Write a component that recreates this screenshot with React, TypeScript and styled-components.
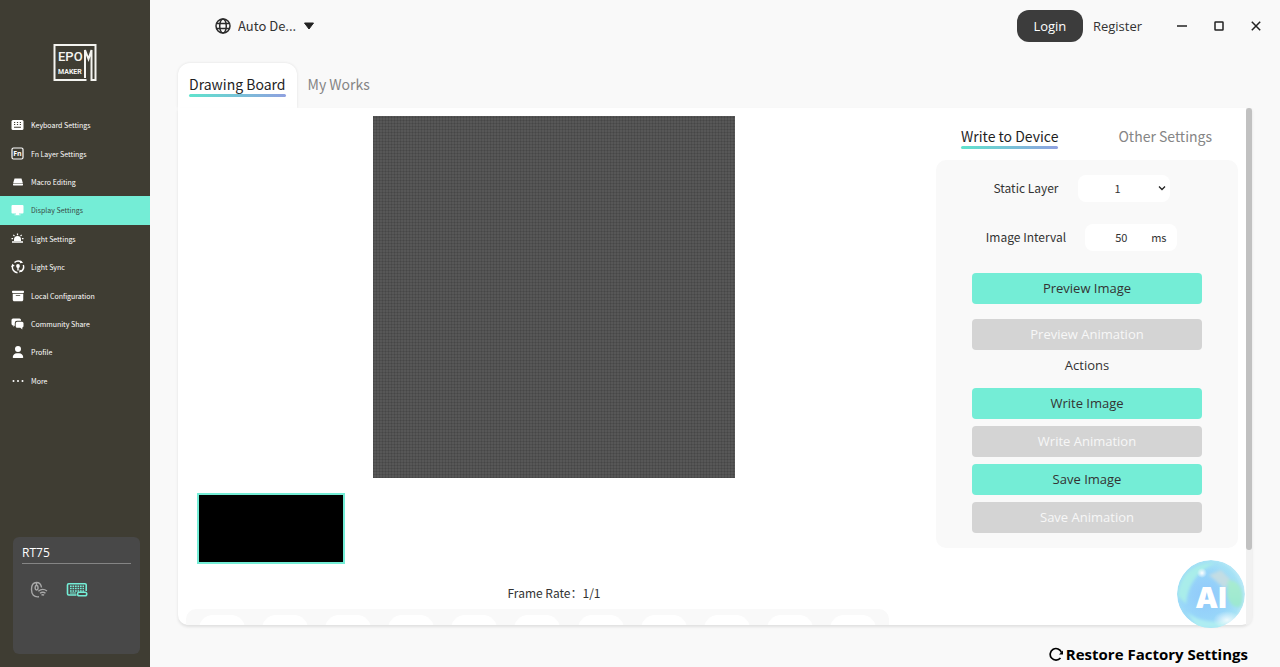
import React from "react";
import styled, { createGlobalStyle } from "styled-components";
import { FaUser, FaBoxArchive } from "react-icons/fa6";

const han = `"Noto Sans CJK SC", "Noto Sans", sans-serif`;
const ui = `"Open Sans", "Noto Sans", "Noto Sans CJK SC", sans-serif`;
const mint = "#74edd6";
const underline = "linear-gradient(90deg, #5fe3cd, #8fa0e0)";

const GlobalStyle = createGlobalStyle`
  * { box-sizing: border-box; }
  body { margin: 0; background: #f9f9f9; color: #333; font-family: ${han}; }
  button, select, input { font: inherit; color: inherit; border: 0; background: none; padding: 0; margin: 0; }
  button { cursor: pointer; }
  svg { display: block; flex: none; }
`;

const Shell = styled.div`
  display: flex;
  height: 100vh;
  overflow: hidden;
`;

const Sidebar = styled.aside`
  flex: none;
  width: 150px;
  display: flex;
  flex-direction: column;
  background: #3f3d33;
  padding-bottom: 13px;
`;

const Brand = styled.div`
  display: flex;
  justify-content: center;
  padding: 43px 0 29px;
`;

const Menu = styled.nav`
  display: grid;
  grid-auto-rows: 1fr;
  height: 284px;
`;

const MenuLink = styled.a<{ $active?: boolean }>`
  display: grid;
  grid-template-columns: 13px 1fr;
  align-items: center;
  gap: 7px;
  padding-left: 11px;
  font-size: 7px;
  line-height: 12px;
  text-decoration: none;
  white-space: nowrap;
  color: ${(p) => (p.$active ? "#3a4a46" : "#fff")};
  background: ${(p) => (p.$active ? mint : "transparent")};
  svg { color: #fff; justify-self: center; }
`;

const DeviceCard = styled.section`
  margin: auto 10px 0 13px;
  height: 117px;
  border-radius: 6px;
  background: #484848;
  padding: 6px 9px;
`;

const DeviceName = styled.h2`
  margin: 0;
  font: 400 12px/20px ${ui};
  color: #fff;
  border-bottom: 1px solid #858585;
`;

const DeviceModes = styled.div`
  display: flex;
  gap: 18px;
  padding: 17px 8px;
`;

const Main = styled.main`
  flex: 1;
  min-width: 0;
  display: flex;
  flex-direction: column;
  padding: 0 28px 0 28px;
`;

const TopBar = styled.header`
  display: flex;
  align-items: center;
  height: 52px;
  padding: 0 0 0 37px;
  margin-right: -14px;
`;

const Language = styled.label`
  display: flex;
  align-items: center;
  gap: 7px;
`;

const LanguageSelect = styled.select`
  appearance: none;
  width: 59px;
  font-size: 13px;
  line-height: 24px;
`;

const Account = styled.div`
  display: flex;
  align-items: center;
  gap: 10px;
  margin-left: auto;
  font: 400 13px/20px ${ui};
`;

const LoginButton = styled.button`
  width: 66px;
  height: 32px;
  border-radius: 12px;
  background: #3c3c3c;
  color: #fff;
`;

const WindowButtons = styled.div`
  display: flex;
  gap: 17px;
  margin-left: 20px;
  button { width: 20px; height: 20px; display: grid; place-items: center; }
`;

const Tabs = styled.div`
  display: flex;
  margin-top: 11px;
`;

const Tab = styled.button<{ $active?: boolean }>`
  height: 45px;
  padding: 10px 11px 11px;
  border-radius: 12px 12px 0 0;
  font-size: 14px;
  line-height: 22px;
  color: ${(p) => (p.$active ? "#1f1f1f" : "#858585")};
  background: ${(p) => (p.$active ? "#fff" : "transparent")};
  box-shadow: ${(p) => (p.$active ? "0 0 3px rgba(0, 0, 0, 0.1)" : "none")};
`;

const TabLabel = styled.span<{ $active?: boolean }>`
  display: block;
  &::after {
    content: "";
    display: block;
    height: 3px;
    margin-top: -1px;
    border-radius: 2px;
    background: ${(p) => (p.$active ? underline : "none")};
  }
`;

const Panel = styled.section`
  position: relative;
  flex: 1;
  min-height: 0;
  display: flex;
  background: #fff;
  border-radius: 0 0 10px 10px;
  box-shadow: 0 2px 3px rgba(0, 0, 0, 0.1);
`;

const PanelBody = styled.div`
  flex: 1;
  min-width: 0;
  display: flex;
  gap: 6px;
  padding-right: 8px;
  overflow: hidden;
  border-radius: 0 0 0 10px;
`;

const Board = styled.div`
  flex: 1;
  min-width: 0;
  display: flex;
  flex-direction: column;
  align-items: center;
  padding-top: 8px;
`;

const PixelCanvas = styled.div`
  flex: none;
  width: 362px;
  height: 362px;
  background:
    repeating-linear-gradient(90deg, rgba(0, 0, 0, 0.1) 0 1px, transparent 1px 3px),
    repeating-linear-gradient(0deg, rgba(0, 0, 0, 0.1) 0 1px, transparent 1px 3px),
    #575757;
`;

const Frame = styled.button`
  flex: none;
  align-self: flex-start;
  width: 148px;
  height: 71px;
  margin: 15px 0 0 19px;
  border: 2px solid ${mint};
  background: #000;
`;

const FrameRate = styled.p`
  margin: 17px 0 4px;
  font-size: 12px;
  line-height: 24px;
`;

const Tools = styled.div`
  flex: none;
  align-self: stretch;
  display: grid;
  grid-template-columns: repeat(11, 1fr);
  justify-items: center;
  margin: 0 41px 0 8px;
  padding: 6px 4px;
  border-radius: 10px;
  background: #f9f9f9;
`;

const Tool = styled.button`
  width: 46px;
  height: 46px;
  border-radius: 14px;
  background: #fff;
`;

const Side = styled.div`
  flex: none;
  width: 302px;
  padding-top: 17px;
`;

const SideTabs = styled.div`
  display: flex;
  justify-content: space-between;
  padding: 0 26px 0 25px;
`;

const SideTab = styled.button<{ $active?: boolean }>`
  font-size: 14px;
  line-height: 22px;
  color: ${(p) => (p.$active ? "#1f1f1f" : "#858585")};
`;

const Settings = styled.div`
  margin-top: 11px;
  height: 388px;
  padding: 15px 36px;
  border-radius: 10px;
  background: #f9f9f9;
  display: flex;
  flex-direction: column;
`;

const Field = styled.div`
  display: flex;
  align-items: center;
  justify-content: center;
  gap: 19px;
  height: 27px;
  margin-bottom: 22px;
  margin-right: 11px;
  font-size: 12px;
  line-height: 20px;
  label { padding-bottom: 2px; }
`;

const FieldBox = styled.div`
  display: flex;
  align-items: center;
  width: 92px;
  height: 27px;
  padding: 0 3px 1px 30px;
  border-radius: 8px;
  background: #fff;
  font-size: 11px;
`;

const LayerSelect = styled.select`
  appearance: none;
  width: 50px;
  padding-left: 7px;
`;

const IntervalInput = styled.input`
  width: 36px;
`;

const Action = styled.button`
  flex: none;
  height: 31px;
  padding-bottom: 1px;
  border-radius: 4px;
  background: ${mint};
  font: 400 13px/20px ${ui};
  &:disabled { background: #d4d4d4; color: #f7f7f7; }
`;

const ActionGroup = styled.div<{ $gap: number }>`
  display: grid;
  gap: ${(p) => p.$gap}px;
`;

const ActionsTitle = styled.h3`
  margin: 5px 0 13px;
  text-align: center;
  font: 400 13px/20px ${ui};
`;

const ScrollTrack = styled.div`
  flex: none;
  width: 6px;
  background: #f1f1f1;
  border-radius: 0 0 6px 0;
`;

const ScrollThumb = styled.div`
  height: 85.5%;
  border-radius: 3px;
  background: #c1c1c1;
`;

const Assistant = styled.button`
  position: absolute;
  right: 7px;
  bottom: -3px;
  width: 68px;
  height: 68px;
`;

const Footer = styled.footer`
  flex: none;
  display: flex;
  justify-content: flex-end;
  height: 42px;
  padding: 17px 4px 0 0;
`;

const Restore = styled.button`
  display: flex;
  align-items: center;
  gap: 3px;
  height: 24px;
  font: 700 15px/24px ${ui};
  color: #000;
`;

const Logo = () => (
  <svg width="44" height="39" viewBox="0 0 44 39" role="img" aria-label="EPOMAKER">
    <path d="M33.500 37H1.500V2H42.500V37H38.500V7L35.500 16L32 7V35" fill="none" stroke="#f4f4f0" strokeWidth="2" />
    <text x="5" y="18" fontFamily="Roboto" fontSize="13" fontWeight="500" fill="#f4f4f0">EPO</text>
    <text x="5" y="31" fontFamily="Roboto" fontSize="7" fontWeight="700" fill="#f4f4f0">MAKER</text>
  </svg>
);

const KeyboardIcon = () => (
  <svg width="13" height="12" viewBox="0 0 13 12">
    <rect x=".5" y="1" width="12" height="10" rx="1.500" fill="currentColor" />
    <path d="M3 3.500h1.200M5.900 3.500h1.200M8.800 3.500H10M3 5.500h1.200M5.900 5.500h1.200M8.800 5.500H10M3 8.200h7" stroke="#3f3d33" strokeWidth="1.100" />
  </svg>
);
const FnIcon = () => (
  <svg width="13" height="13" viewBox="0 0 13 13">
    <rect x="1" y="1" width="11" height="11" rx="1.500" fill="none" stroke="currentColor" strokeWidth="1.200" />
    <text x="6.500" y="9" textAnchor="middle" fontFamily="Open Sans" fontWeight="700" fontSize="7" fill="currentColor">Fn</text>
  </svg>
);
const MacroIcon = () => (
  <svg width="12" height="8" viewBox="0 0 12 8" fill="currentColor">
    <path d="M2.500.5h7l1.300 4.500H1.200z" />
    <rect x="1" y="5.400" width="10" height="2" rx=".6" />
  </svg>
);
const DisplayIcon = () => (
  <svg width="13" height="12" viewBox="0 0 13 12" fill="currentColor">
    <rect x=".5" y="1" width="12" height="8.500" rx="1" />
    <path d="M5 9h3v1.500h1.500v.8h-6v-.8H5z" />
  </svg>
);
const LightIcon = () => (
  <svg width="13" height="11" viewBox="0 0 13 11">
    <path d="M3 8V6.500a3.500 3.500 0 0 1 7 0V8z" fill="currentColor" />
    <path d="M1 9h11" stroke="currentColor" strokeWidth="1.500" />
    <path d="M6.500.5v1.700M2.300 1.800l1.200 1.300M10.700 1.800L9.500 3.100M.5 5.700h1.600M10.900 5.700h1.600" stroke="currentColor" strokeWidth="1.200" />
  </svg>
);
const SyncIcon = () => (
  <svg width="14" height="14" viewBox="0 0 14 14" fill="none" stroke="currentColor" strokeWidth="1.400">
    <path d="M3.500 2.500a5.500 5.500 0 0 1 6.700-.4M12.300 5a5.500 5.500 0 0 1-2.500 6.500M6.500 12.700A5.600 5.600 0 0 1 1.500 6" />
    <path d="M9.600.3l2.500 2.500-3.200.5zM11.300 11.500l-3.200 1 .6-3zM0 7l1.500-3.200L3.800 6z" fill="currentColor" stroke="none" />
    <circle cx="7" cy="6" r="1.900" fill="currentColor" stroke="none" />
    <path d="M7 7v3.500" />
  </svg>
);
const ChatIcon = () => (
  <svg width="13" height="12" viewBox="0 0 13 12" fill="currentColor">
    <path d="M2 .5h6.500A1.500 1.500 0 0 1 10 2v.8H6A2.200 2.200 0 0 0 3.800 5v2.500L2.500 9V7.400A1.700 1.700 0 0 1 .5 5.800V2A1.500 1.500 0 0 1 2 .5z" />
    <path d="M6.200 3.700h4.800A1.500 1.500 0 0 1 12.500 5.200v2.900A1.500 1.500 0 0 1 11.300 9.600V11.500L9.300 9.700H6.200A1.500 1.500 0 0 1 4.700 8.200V5.200A1.500 1.500 0 0 1 6.200 3.700z" />
  </svg>
);
const DotsIcon = () => (
  <svg width="12" height="4" viewBox="0 0 12 4" fill="currentColor">
    <circle cx="1.500" cy="2" r="1" /><circle cx="6" cy="2" r="1" /><circle cx="10.500" cy="2" r="1" />
  </svg>
);
const MouseIcon = () => (
  <svg width="18" height="18" viewBox="0 0 18 18" fill="none" stroke="#a8a8a8" strokeWidth="1.400">
    <path d="M9 15.800C4 16.500 1.500 13.500 1.500 8.500S3.500 1.500 6.500 1.500c3 0 4.600 2 5 5" />
    <path d="M6.500 1.500v3" /><rect x="5.200" y="4.500" width="2.800" height="4.500" rx="1.400" />
    <path d="M8.300 10.200c3-2.500 6-2.200 8.700-.2M10 12.300c2-1.500 3.700-1.400 5.500-.1M11.500 14.300c1-.8 1.700-.7 2.600 0" />
  </svg>
);
const BoardIcon = () => (
  <svg width="22" height="18" viewBox="0 0 22 18" fill="none" stroke={mint}>
    <path d="M10.500 14H2.700A1.200 1.200 0 0 1 1.500 12.800V4A1.200 1.200 0 0 1 2.700 2.800H19A1.200 1.200 0 0 1 20.200 4V10" strokeWidth="1.600" />
    <path d="M4 5.300h14M4 7.600h14M4 9.900h14" strokeWidth="1.500" strokeDasharray="1.700 .8" />
    <path d="M4 12h6" strokeWidth="1" />
    <rect x="11.500" y="11.200" width="9.300" height="3.600" rx="1.800" strokeWidth="1.500" />
  </svg>
);
const GlobeIcon = () => (
  <svg width="16" height="16" viewBox="0 0 16 16" fill="none" stroke="#2b2b2b" strokeWidth="1.500">
    <circle cx="8" cy="8" r="7" /><ellipse cx="8" cy="8" rx="3.300" ry="7" />
    <path d="M1.500 5.500h13M1.500 10.500h13" />
  </svg>
);

const AssistantOrb = () => (
  <svg width="68" height="68" viewBox="0 0 68 68">
    <defs>
      <radialGradient id="orb" cx=".42" cy=".52" r=".58">
        <stop offset="0" stopColor="#90c8fb" /><stop offset=".6" stopColor="#98d6f9" /><stop offset=".88" stopColor="#a6e2f5" /><stop offset="1" stopColor="#bdeaf8" />
      </radialGradient>
      <radialGradient id="shine"><stop offset="0" stopColor="#fff" /><stop offset="1" stopColor="#fff" stopOpacity="0" /></radialGradient>
      <linearGradient id="leaf" x1="0" y1="0" x2="0" y2="1"><stop offset="0" stopColor="#a9ecd0" /><stop offset="1" stopColor="#9be8d0" /></linearGradient>
      <filter id="soft"><feGaussianBlur stdDeviation="1.500" /></filter>
      <clipPath id="ball"><circle cx="34" cy="34" r="34" /></clipPath>
    </defs>
    <g clipPath="url(#ball)">
      <circle cx="34" cy="34" r="34" fill="url(#orb)" />
      <g filter="url(#soft)">
        <path d="M1 36C2 14 18 2 38 3C26 9 12 18 9 44z" fill="#a9edea" />
        <path d="M32 15l12-5 9 9-5 10z" fill="#c3dde4" />
        <path d="M51 20c12 0 17 12 13 26-7 4-13-4-14-12z" fill="url(#leaf)" />
        <path d="M10 52c12 10 28 12 42 8l-8 8H20z" fill="#aeedf2" />
      </g>
      <circle cx="25" cy="13" r="5" fill="url(#shine)" />
      <ellipse cx="50" cy="60" rx="14" ry="9" fill="url(#shine)" opacity=".8" />
    </g>
    <text x="34" y="48" textAnchor="middle" fontFamily="Inter" fontWeight="900" fontSize="29" fill="#fff">AI</text>
  </svg>
);

const menu = [
  { label: "Keyboard Settings", icon: <KeyboardIcon /> },
  { label: "Fn Layer Settings", icon: <FnIcon /> },
  { label: "Macro Editing", icon: <MacroIcon /> },
  { label: "Display Settings", icon: <DisplayIcon />, active: true },
  { label: "Light Settings", icon: <LightIcon /> },
  { label: "Light Sync", icon: <SyncIcon /> },
  { label: "Local Configuration", icon: <FaBoxArchive size={12} /> },
  { label: "Community Share", icon: <ChatIcon /> },
  { label: "Profile", icon: <FaUser size={12} /> },
  { label: "More", icon: <DotsIcon /> },
];

const tools = ["Pen", "Eraser", "Fill", "Line", "Rectangle", "Circle", "Text", "Move", "Undo", "Redo", "Clear"];

export default function App() {
  return (
    <Shell>
      <GlobalStyle />
      <Sidebar>
        <Brand><Logo /></Brand>
        <Menu>
          {menu.map((m) => (
            <MenuLink key={m.label} href="#" $active={m.active}>{m.icon}<span>{m.label}</span></MenuLink>
          ))}
        </Menu>
        <DeviceCard>
          <DeviceName>RT75</DeviceName>
          <DeviceModes><MouseIcon /><BoardIcon /></DeviceModes>
        </DeviceCard>
      </Sidebar>
      <Main>
        <TopBar>
          <Language>
            <GlobeIcon />
            <LanguageSelect aria-label="Language"><option>Auto De...</option></LanguageSelect>
            <svg width="10" height="8" viewBox="0 0 10 8"><path d="M.5 1h9L5 7z" fill="#222" stroke="#222" strokeLinejoin="round" /></svg>
          </Language>
          <Account>
            <LoginButton>Login</LoginButton>
            <button>Register</button>
            <WindowButtons>
              <button aria-label="Minimize"><svg width="12" height="12" viewBox="0 0 12 12" stroke="#222" strokeWidth="1.500"><path d="M1 6h10" /></svg></button>
              <button aria-label="Maximize"><svg width="12" height="12" viewBox="0 0 12 12" fill="none" stroke="#222" strokeWidth="1.500"><rect x="2" y="2" width="8" height="8" rx=".5" /></svg></button>
              <button aria-label="Close"><svg width="12" height="12" viewBox="0 0 12 12" stroke="#222" strokeWidth="1.500"><path d="M1.800 1.800l8.400 8.400M10.200 1.800l-8.400 8.400" /></svg></button>
            </WindowButtons>
          </Account>
        </TopBar>
        <Tabs>
          <Tab $active><TabLabel $active>Drawing Board</TabLabel></Tab>
          <Tab><TabLabel>My Works</TabLabel></Tab>
        </Tabs>
        <Panel>
          <PanelBody>
            <Board>
              <PixelCanvas />
              <Frame aria-label="Frame 1" />
              <FrameRate>Frame Rate：1/1</FrameRate>
              <Tools>{tools.map((t) => <Tool key={t} aria-label={t} />)}</Tools>
            </Board>
            <Side>
              <SideTabs>
                <SideTab $active><TabLabel $active>Write to Device</TabLabel></SideTab>
                <SideTab><TabLabel>Other Settings</TabLabel></SideTab>
              </SideTabs>
              <Settings>
                <Field>
                  <label htmlFor="layer">Static Layer</label>
                  <FieldBox>
                    <LayerSelect id="layer"><option>1</option></LayerSelect>
                    <svg width="8" height="6" viewBox="0 0 8 6" fill="none" stroke="#222" strokeWidth="1.300"><path d="M1 1.500l3 3 3-3" /></svg>
                  </FieldBox>
                </Field>
                <Field>
                  <label htmlFor="interval">Image Interval</label>
                  <FieldBox>
                    <IntervalInput id="interval" defaultValue="50" />
                    <span>ms</span>
                  </FieldBox>
                </Field>
                <ActionGroup $gap={15}>
                  <Action>Preview Image</Action>
                  <Action disabled>Preview Animation</Action>
                </ActionGroup>
                <ActionsTitle>Actions</ActionsTitle>
                <ActionGroup $gap={7}>
                  <Action>Write Image</Action>
                  <Action disabled>Write Animation</Action>
                  <Action>Save Image</Action>
                  <Action disabled>Save Animation</Action>
                </ActionGroup>
              </Settings>
            </Side>
          </PanelBody>
          <ScrollTrack><ScrollThumb /></ScrollTrack>
          <Assistant aria-label="AI assistant"><AssistantOrb /></Assistant>
        </Panel>
        <Footer>
          <Restore>
            <svg width="14" height="14" viewBox="0 0 14 14" fill="none" stroke="#000" strokeWidth="1.700"><path d="M11.500 11A5.800 5.800 0 1 1 12.500 5.500" /><path d="M14 3.500V7.500H10z" fill="#000" stroke="none" /></svg>
            Restore Factory Settings
          </Restore>
        </Footer>
      </Main>
    </Shell>
  );
}
